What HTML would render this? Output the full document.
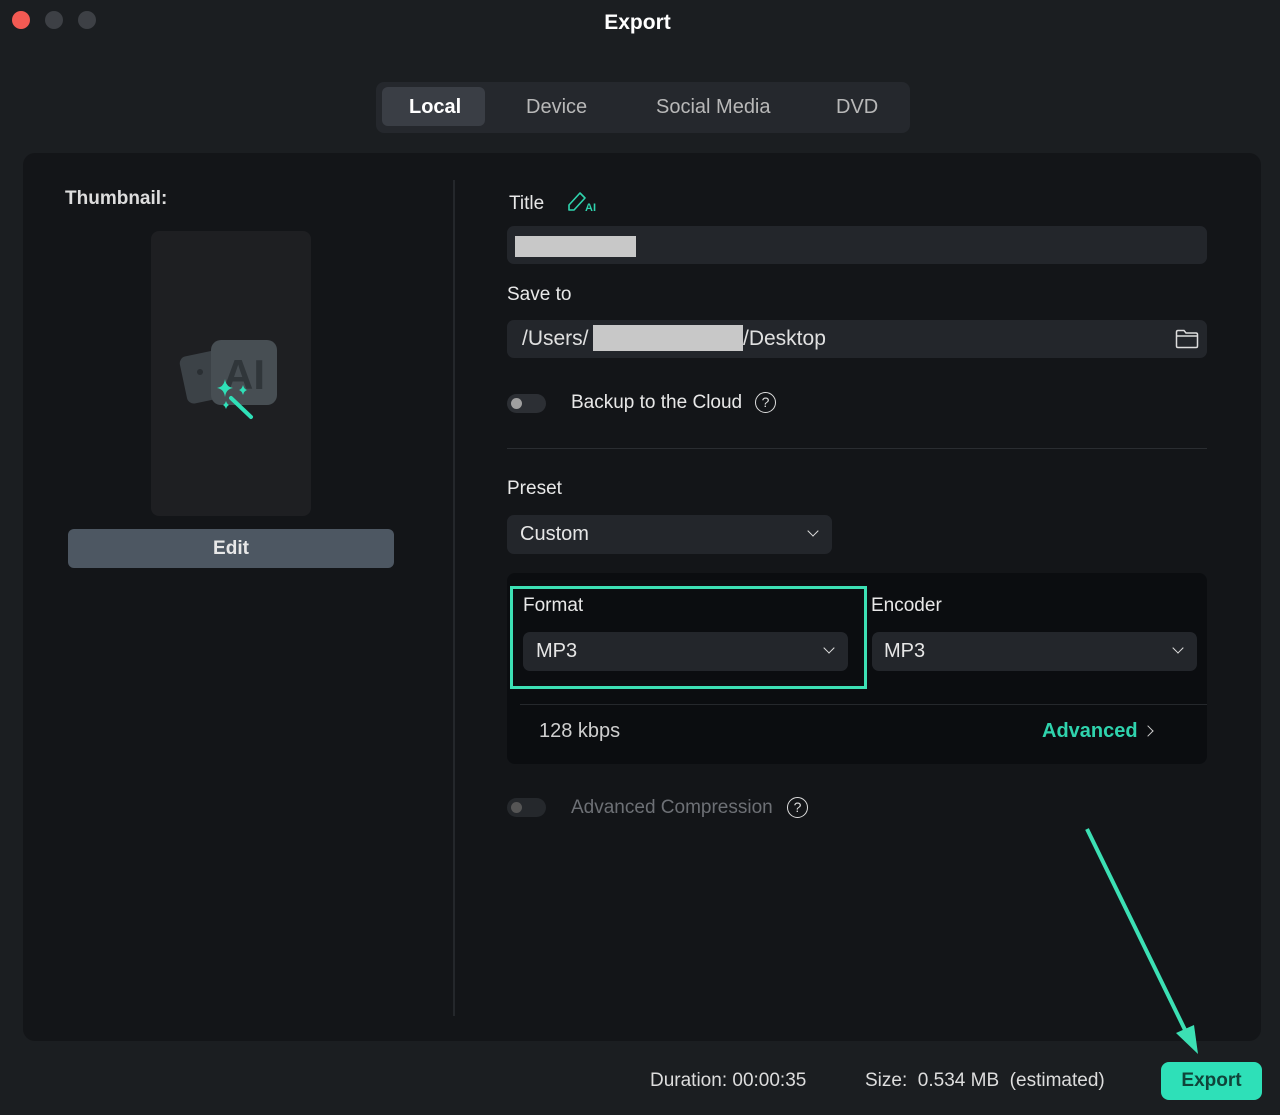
<!DOCTYPE html>
<html><head><meta charset="utf-8"><style>
*{box-sizing:border-box;margin:0;padding:0}
body{width:1280px;height:1115px;background:#1b1e21;font-family:"Liberation Sans",sans-serif;color:#e6e6e6;position:relative;overflow:hidden}
.a{position:absolute}
.dot{position:absolute;top:11px;width:18px;height:18px;border-radius:50%}
.lbl{font-size:19px;color:#e8e8e8}
.inp{background:#23262b;border-radius:7px}
.chev{position:absolute;width:8px;height:8px;border-right:1.6px solid #ddd;border-bottom:1.6px solid #ddd;transform:rotate(45deg)}
</style></head><body>
<div class="dot" style="left:12px;background:#f25a53"></div>
<div class="dot" style="left:45px;background:#3d4045"></div>
<div class="dot" style="left:78px;background:#3d4045"></div>
<div class="a" style="left:0;width:1275px;top:11px;text-align:center;font-weight:bold;font-size:21px;color:#fff">Export</div>

<div class="a" style="left:376px;top:82px;width:534px;height:51px;background:#25282d;border-radius:8px"></div>
<div class="a" style="left:382px;top:87px;width:103px;height:39px;background:#3a3e45;border-radius:6px"></div>
<div class="a" style="left:409px;top:96px;font-size:20px;font-weight:bold;color:#fff">Local</div>
<div class="a" style="left:526px;top:96px;font-size:20px;color:#b8b8b8">Device</div>
<div class="a" style="left:656px;top:96px;font-size:20px;color:#b8b8b8">Social Media</div>
<div class="a" style="left:836px;top:96px;font-size:20px;color:#b8b8b8">DVD</div>

<div class="a" style="left:23px;top:153px;width:1238px;height:888px;background:#131518;border-radius:12px"></div>
<div class="a" style="left:453px;top:180px;width:2px;height:836px;background:#24272b"></div>

<div class="a" style="left:65px;top:188px;font-size:19px;font-weight:bold;color:#ddd">Thumbnail:</div>
<div class="a" style="left:151px;top:231px;width:160px;height:285px;background:#1e1f22;border-radius:8px"></div>
<svg class="a" style="left:175px;top:335px" width="110" height="90" viewBox="0 0 110 90">
<rect x="8" y="18" width="42" height="48" rx="7" fill="#3c4247" transform="rotate(-12 29 42)"/>
<circle cx="25" cy="37" r="3" fill="#2a2f33"/>
<rect x="36" y="5" width="66" height="65" rx="10" fill="#474e53"/>
<text x="69" y="54" font-family="Liberation Sans" font-weight="bold" font-size="42" fill="#30363a" text-anchor="middle">AI</text>
<path d="M56 63 L76 82" stroke="#2fe0b8" stroke-width="4" stroke-linecap="round"/>
<path d="M50 44 Q51 52 58 53 Q51 54 50 62 Q49 54 42 53 Q49 52 50 44Z" fill="#2fe0b8"/>
<path d="M68 50 Q69 54 72 55 Q69 56 68 60 Q67 56 64 55 Q67 54 68 50Z" fill="#2fe0b8"/>
<path d="M51 66 Q52 69 54 70 Q52 71 51 74 Q50 71 48 70 Q50 69 51 66Z" fill="#2fe0b8"/>
</svg>
<div class="a" style="left:68px;top:529px;width:326px;height:39px;background:#4d5762;border-radius:6px;text-align:center;line-height:39px;font-size:19px;font-weight:bold;color:#e8e8e8">Edit</div>

<div class="a lbl" style="left:509px;top:193px">Title</div>
<svg class="a" style="left:566px;top:190px" width="34" height="24" viewBox="0 0 34 24"><path d="M3 20 L3 15 L14 3 L19 8 L8 20 Z" fill="none" stroke="#2fd3ad" stroke-width="1.6" stroke-linejoin="round"/><text x="19" y="21" font-family="Liberation Sans" font-size="11" fill="#2fd3ad" font-weight="bold">AI</text></svg>
<div class="a inp" style="left:507px;top:226px;width:700px;height:38px"></div>
<div class="a" style="left:515px;top:236px;width:121px;height:21px;background:#c8c8c8"></div>

<div class="a lbl" style="left:507px;top:284px">Save to</div>
<div class="a inp" style="left:507px;top:320px;width:700px;height:38px"></div>
<div class="a" style="left:522px;top:327px;font-size:21px;color:#e0e0e0">/Users/</div>
<div class="a" style="left:593px;top:325px;width:150px;height:26px;background:#c8c8c8"></div>
<div class="a" style="left:743px;top:327px;font-size:21px;color:#e0e0e0">/Desktop</div>
<svg class="a" style="left:1175px;top:329px" width="24" height="20" viewBox="0 0 24 20"><path d="M1.5 3 Q1.5 1.5 3 1.5 L9 1.5 L11 4 L21 4 Q22.5 4 22.5 5.5 L22.5 17 Q22.5 18.5 21 18.5 L3 18.5 Q1.5 18.5 1.5 17Z M1.5 7 L22.5 7" fill="none" stroke="#ddd" stroke-width="1.5"/></svg>

<div class="a" style="left:507px;top:394px;width:39px;height:19px;border-radius:10px;background:#2c2f34"></div>
<div class="a" style="left:511px;top:398px;width:11px;height:11px;border-radius:50%;background:#a0a0a0"></div>
<div class="a lbl" style="left:571px;top:392px">Backup to the Cloud</div>
<div class="a" style="left:755px;top:392px;width:21px;height:21px;border:1.6px solid #ddd;border-radius:50%;text-align:center;font-size:14px;line-height:18px;color:#ddd">?</div>
<div class="a" style="left:507px;top:448px;width:700px;height:1px;background:#2a2d31"></div>

<div class="a lbl" style="left:507px;top:478px">Preset</div>
<div class="a inp" style="left:507px;top:515px;width:325px;height:39px"></div>
<div class="a" style="left:520px;top:523px;font-size:20px;color:#e6e6e6">Custom</div>
<div class="chev" style="left:809px;top:527px"></div>

<div class="a" style="left:507px;top:573px;width:700px;height:191px;background:#0b0d10;border-radius:8px"></div>
<div class="a" style="left:510px;top:586px;width:357px;height:103px;border:3.5px solid #3ce0b4"></div>
<div class="a lbl" style="left:523px;top:595px">Format</div>
<div class="a inp" style="left:523px;top:632px;width:325px;height:39px"></div>
<div class="a" style="left:536px;top:640px;font-size:20px;color:#e6e6e6">MP3</div>
<div class="chev" style="left:825px;top:644px"></div>
<div class="a lbl" style="left:871px;top:595px">Encoder</div>
<div class="a inp" style="left:872px;top:632px;width:325px;height:39px"></div>
<div class="a" style="left:884px;top:640px;font-size:20px;color:#e6e6e6">MP3</div>
<div class="chev" style="left:1174px;top:644px"></div>
<div class="a" style="left:520px;top:704px;width:687px;height:1px;background:#25282c"></div>
<div class="a" style="left:539px;top:720px;font-size:20px;color:#cfcfcf">128 kbps</div>
<div class="a" style="left:1042px;top:720px;font-size:20px;font-weight:bold;color:#2fd3ad">Advanced</div>
<div class="a" style="left:1144px;top:727px;width:8px;height:8px;border-right:1.6px solid #ccc;border-top:1.6px solid #ccc;transform:rotate(45deg)"></div>

<div class="a" style="left:507px;top:798px;width:39px;height:19px;border-radius:10px;background:#25282c"></div>
<div class="a" style="left:511px;top:802px;width:11px;height:11px;border-radius:50%;background:#555"></div>
<div class="a" style="left:571px;top:797px;font-size:19px;color:#6d7075">Advanced Compression</div>
<div class="a" style="left:787px;top:797px;width:21px;height:21px;border:1.6px solid #ddd;border-radius:50%;text-align:center;font-size:14px;line-height:18px;color:#ddd">?</div>

<svg class="a" style="left:0;top:0" width="1280" height="1115"><line x1="1087" y1="829" x2="1188" y2="1036" stroke="#3ce0b4" stroke-width="4"/><path d="M1198 1054 L1176 1033 L1194 1025Z" fill="#3ce0b4"/></svg>

<div class="a" style="left:650px;top:1070px;font-size:19px;color:#ddd">Duration: 00:00:35</div>
<div class="a" style="left:865px;top:1070px;font-size:19px;color:#ddd">Size:&nbsp; 0.534 MB&nbsp; (estimated)</div>
<div class="a" style="left:1161px;top:1062px;width:101px;height:38px;background:#2ee0b8;border-radius:8px;text-align:center;line-height:38px;font-size:19px;font-weight:bold;color:#10443a">Export</div>
</body></html>
